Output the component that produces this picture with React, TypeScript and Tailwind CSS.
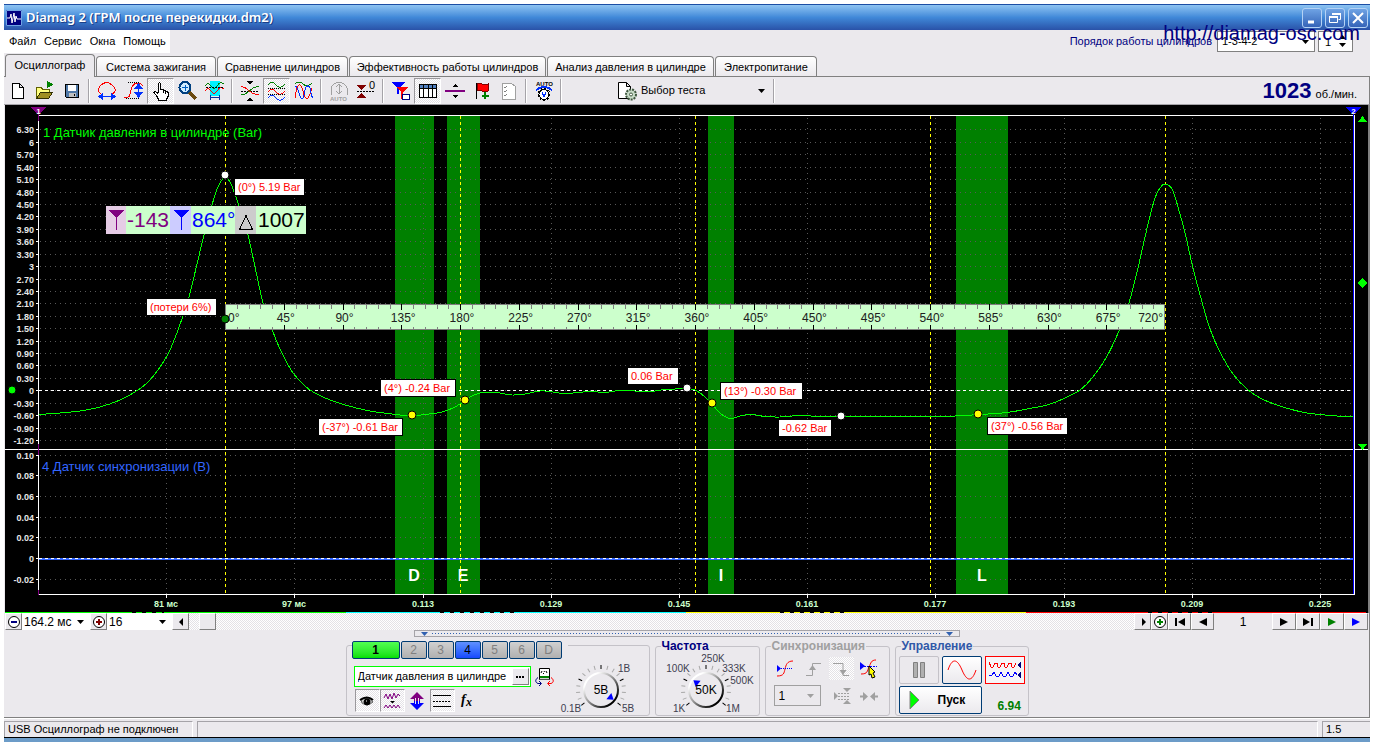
import type { ReactNode } from "react";

const tabs = [
    { title: "Осциллограф", width: "w-[90px]" },
    { title: "Система зажигания", width: "w-[120px]" },
    { title: "Сравнение цилиндров", width: "w-[131px]" },
    { title: "Эффективность работы цилиндров", width: "w-[197px]" },
    { title: "Анализ давления в цилиндре", width: "w-[167px]" },
    { title: "Электропитание", width: "w-[102px]" },
];

const hatch =
    "bg-[repeating-conic-gradient(#ffffff_0_25%,#e4e2e6_0_50%)] bg-[length:2px_2px]";

const raised =
    "border border-t-white border-l-white border-r-[#808080] border-b-[#808080] bg-[#ebe9ed]";

/* ---------- title bar, menu, tabs ---------- */

function TitleButton({ label, children }: { label: string; children: ReactNode }) {
    return (
        <button
            aria-label={label}
            className="w-[20px] h-[20px] flex items-center justify-center rounded-[3px] border border-[#b4d2f5] bg-linear-to-b from-[#6fa3e4] to-[#3564b8]"
        >
            <svg width="14" height="14" viewBox="0 0 14 14" fill="none" stroke="#fff" strokeWidth="2">
                {children}
            </svg>
        </button>
    );
}

function TitleBar() {
    return (
        <header className="h-[26px] flex items-center px-[2px] border-t border-[#1c4ea4] bg-linear-to-b from-[#8ec4f2] via-[#4088d8] to-[#2a52a8]">
            <svg width="16" height="16" viewBox="0 0 16 16" className="mr-[4px]">
                <rect width="16" height="16" fill="#000080" />
                <path d="M.5.500h15v15H.5z" fill="none" stroke="#6fa3e4" />
                <path d="M1 8h3l1-4 1 9 2-10 1 9 1-6 1 3h4" fill="none" stroke="#fff" />
            </svg>
            <h1 className="font-['Noto_Sans'] font-semibold text-[13px] text-white [text-shadow:1px_1px_#1c3f88]">
                Diamag 2 (ГРМ после перекидки.dm2)
            </h1>
            <div className="ml-auto flex gap-[3px]">
                <TitleButton label="Свернуть">
                    <path d="M3 11h6" strokeWidth="3" />
                </TitleButton>
                <TitleButton label="Развернуть">
                    <path d="M4.500 4V2.500h8v6h-2" strokeWidth="1" />
                    <path d="M1.500 5.500h8v6h-8z" strokeWidth="1" />
                    <path d="M1 6h9M4 3h9" />
                </TitleButton>
                <TitleButton label="Закрыть">
                    <path d="M2 2l10 10M12 2L2 12" />
                </TitleButton>
            </div>
        </header>
    );
}

function MenuBar() {
    return (
        <div className="h-[24px] flex justify-between">
            <nav className="w-[166px] h-[23px] flex items-center gap-[8px] pl-[5px] bg-white text-[11px] whitespace-nowrap">
                <a href="#file">Файл</a>
                <a href="#service">Сервис</a>
                <a href="#windows">Окна</a>
                <a href="#help">Помощь</a>
            </nav>
            <div className="relative h-[23px] flex items-center pr-[17px]">
                <label htmlFor="order" className="text-[11px] text-[#000080] mr-[5px]">
                    Порядок работы цилиндров
                </label>
                <span className="relative flex">
                    <select
                        id="order"
                        className="appearance-none w-[98px] h-[21px] pl-[4px] border border-[#808080] bg-white text-[11px]"
                    >
                        <option>1-3-4-2</option>
                    </select>
                    <Arrow className="absolute right-[6px] top-[9px]" />
                </span>
                <span className="relative flex ml-[3px]">
                    <input
                        aria-label="Цилиндр"
                        defaultValue="1"
                        className="w-[35px] h-[21px] pl-[6px] border border-[#808080] bg-white text-[11px]"
                    />
                    <svg width="7" height="12" viewBox="0 0 7 12" className="absolute right-[7px] top-[4px]">
                        <path d="M0 4L3.500 0 7 4zM0 8h7l-3.500 4z" />
                    </svg>
                </span>
                <a
                    href="#site"
                    className="absolute right-[10px] top-[-9px] text-[20px] leading-[24px] text-[#000080]"
                >
                    http://diamag-osc.com
                </a>
            </div>
        </div>
    );
}

function Arrow({ className, fill = "#000" }: { className?: string; fill?: string }) {
    return (
        <svg width="7" height="4" viewBox="0 0 7 4" className={`pointer-events-none ${className ?? ""}`}>
            <path d="M0 0h7L3.500 4z" fill={fill} />
        </svg>
    );
}

function Tabs() {
    return (
        <div role="tablist" className="h-[23px] flex items-end gap-px pl-px border-b border-[#808080]">
            {tabs.map((tab, index) => (
                <button
                    key={tab.title}
                    role="tab"
                    aria-selected={index === 0}
                    className={`${tab.width} border border-b-0 border-[#808080] rounded-t-[4px] text-[11px] leading-[18px] whitespace-nowrap ${
                        index === 0
                            ? "h-[23px] -mb-px bg-[#ebe9ed] pb-[2px]"
                            : "h-[20px] bg-linear-to-b from-white to-[#ebe9ed]"
                    }`}
                >
                    {tab.title}
                </button>
            ))}
        </div>
    );
}

/* ---------- toolbar ---------- */

function Tool({ label, on, children }: { label: string; on?: boolean; children: ReactNode }) {
    return (
        <button
            aria-label={label}
            aria-pressed={on}
            className={`w-[27px] h-[26px] shrink-0 flex items-center justify-center ${
                on ? `border border-t-[#9a989c] border-l-[#9a989c] border-white ${hatch}` : ""
            }`}
        >
            <svg width="22" height="22" viewBox="0 0 22 22" fill="none" stroke="#000" shapeRendering="crispEdges">
                {children}
            </svg>
        </button>
    );
}

function Separator() {
    return (
        <span className="w-[8px] h-[24px] shrink-0 flex justify-center">
            <span className="w-[2px] bg-[#a5a3a8] border-r border-white" />
        </span>
    );
}

function Toolbar() {
    return (
        <div className="h-[28px] flex items-center border-b border-[#a5a3a8] border-r border-r-[#808080]">
            <Tool label="Новый">
                <path d="M5.500 3.500h7l4 4v11h-11zM12.500 3.500v4h4" fill="#fff" />
            </Tool>
            <Tool label="Открыть">
                <path d="M2.500 18.500v-11h5l1 2h7v3" fill="#ffff80" stroke="#606000" />
                <path d="M2.500 18.500l4-6h12l-4 6z" fill="#a09020" stroke="#303000" />
                <path d="M13.500 7.500V1.500l5 3z" fill="#008000" stroke="#008000" />
            </Tool>
            <Tool label="Сохранить">
                <path d="M4.500 4.500h13v13h-12l-1-1z" fill="#5078a8" />
                <path d="M7 5h8v6H7z" fill="#fff" stroke="none" />
                <path d="M8 13h7v4H8z" fill="#c0c0c0" stroke="none" />
                <path d="M13 14v2" />
            </Tool>
            <Separator />
            <Tool label="Период">
                <path d="M5 14C1 11 2 8 5 5q6-5 11 0c4 3 5 6 0 9" stroke="#f00" />
                <path d="M3 16.500h16M7 13l-4 3.500L7 20M15 13l4 3.500-4 3.500" stroke="#0030ff" />
                <path d="M3 16.500l4-3v6zM19 16.500l-4-3v6z" fill="#0030ff" stroke="none" />
            </Tool>
            <Tool label="Амплитуда">
                <path d="M5 2.500h12M3 18.500h14" strokeDasharray="1 1" />
                <path d="M1 18c6 0 6-3 7-8s3-7 7-7q3 0 5 3" stroke="#f00" />
                <path d="M15.500 4v13" stroke="#0030ff" />
                <path d="M11 9l4.500-6L20 9zM11 12l4.500 6 4.500-6z" fill="#0030ff" stroke="none" />
            </Tool>
            <Tool label="Рука" on>
                <path
                    d="M8.500 12.500v-9q1-2 2 0v6q1-1 2.500 0v1q1-1 2.500 0v1q2-1 2.500 1v4l-2 4h-7l-2-4-3-4q1-2 4 1"
                    fill="#fff"
                />
                <path d="M13 10v3M15.500 11v3" />
            </Tool>
            <Tool label="Масштаб">
                <path d="M12 12l7 7" stroke="#6b4a10" strokeWidth="3" />
                <circle cx="8" cy="7.500" r="5.500" fill="#d0ecff" stroke="#004080" strokeWidth="2" />
                <path d="M5 7.500h6M8 4.500v6" stroke="#0060c0" />
            </Tool>
            <Tool label="Фрагмент">
                <path d="M6 1h10v15H6z" fill="#00f0ff" stroke="none" />
                <path d="M1 6q3-5 6 0t6 0 7-2" stroke="#008000" />
                <path d="M1 11q3-5 6 0t6 0 7-2" stroke="#f00" />
                <path d="M2 7.500h18" strokeDasharray="2 1" />
                <path d="M6.500 15v5M15.500 15v5M7 17.500h8" stroke="#0030a0" />
            </Tool>
            <Separator />
            <Tool label="Совместить">
                <path d="M2 11h18" strokeDasharray="2 1" />
                <path d="M2 7c6-2 8 8 18 8" stroke="#f00" />
                <path d="M2 15c8 0 10-10 18-8" stroke="#008000" />
                <path d="M8 1h6l-3 4zM8 21h6l-3-4z" fill="#000" stroke="none" />
            </Tool>
            <Tool label="Разделить" on>
                <path d="M2 5q4-5 8 0t9-1" stroke="#008000" />
                <path d="M2 12q4-5 8 0t9-1" stroke="#f00" />
                <path d="M2 18q4-5 8 0t9-1" stroke="#0030ff" />
                <path d="M2 8.500h18M2 14.500h18" strokeDasharray="1 1" />
            </Tool>
            <Tool label="Наложить">
                <path d="M2 4q4-4 8 0t9-1" stroke="#008000" />
                <path d="M2 18C4 2 8 2 10 11s5 12 9-3" stroke="#f00" />
                <path d="M2 6c4 0 4 13 7 13s2-14 6-13 2 10 5 12" stroke="#0030ff" />
            </Tool>
            <Separator />
            <Tool label="Авто амплитуда">
                <path d="M3 15V8q2-5 8-6 6 1 8 6v7M11 4v10M8 7l3-3 3 3M8 11l3 3 3-3" stroke="#a0a0a0" />
                <text x="2" y="21" fontSize="6" fontWeight="700" fill="#a0a0a0" stroke="none">AUTO</text>
            </Tool>
            <Tool label="Сброс нуля">
                <path d="M2 11.500h18" strokeDasharray="2 1" />
                <path d="M2 5.500h9" stroke="#800000" />
                <path d="M3 6h7l-3.500 4z" fill="#800000" stroke="none" />
                <path d="M2 17.500h9" stroke="#800000" />
                <path d="M3 17h7l-3.500-4z" fill="#800000" stroke="none" />
                <text x="14" y="9" fontSize="11" fill="#000" stroke="none">0</text>
            </Tool>
            <Separator />
            <Tool label="Курсоры">
                <path d="M1 2h14L9 8v6H7V8z" fill="#00f" stroke="none" />
                <path d="M7 7h11l-5 5v7h-2v-7z" fill="#f00" stroke="none" />
                <path d="M12.500 14.500h7v5h-7z" fill="#fff" stroke="#000080" />
            </Tool>
            <Tool label="Таблица" on>
                <path d="M2.500 4.500h17v13h-17z" fill="#fff" />
                <path d="M3 6h16" stroke="#5080c0" strokeWidth="3" />
                <path d="M2 8.500h18M6.500 5v13M11.500 5v13M15.500 5v13" />
            </Tool>
            <Tool label="Линейка">
                <path d="M1 11h20" stroke="#800080" strokeWidth="2" />
                <path d="M8 7h6l-3-3zM8 15h6l-3 3z" fill="#000" stroke="none" />
            </Tool>
            <Tool label="Маркер">
                <path d="M5.500 3v16" />
                <path d="M6 4q3-2 5 0t6 0v7q-3 2-6 0t-5 0z" fill="#f00" stroke="#800000" />
                <path d="M14 12v7M10.500 15.500h7" stroke="#008000" strokeWidth="2" />
            </Tool>
            <Tool label="Отчёт">
                <path d="M4.500 3.500h9l4 3v13h-13z" fill="#fff" stroke="#a0a0a0" />
                <path d="M6 7l1 1 2-2M6 11l1 1 2-2M6 15l1 1 2-2" stroke="#808080" />
            </Tool>
            <Separator />
            <Tool label="Авто">
                <text x="3" y="6" fontSize="6" fontWeight="700" fill="#000" stroke="none">AUTO</text>
                <path d="M3 10q8-6 16 0" stroke="#0030ff" strokeWidth="2" />
                <circle cx="11" cy="14.500" r="5" fill="#fff" />
                <circle cx="11" cy="14.500" r="6" strokeDasharray="2 2" />
                <path d="M9 12l2 5 2-5" stroke="#0030ff" />
            </Tool>
            <Separator />
            <button className="w-[205px] flex items-center pl-[51px] pr-[5px] text-[11px]">
                <svg width="22" height="22" viewBox="0 0 22 22" fill="none" stroke="#000" className="mr-[3px]">
                    <path d="M2.500 2.500h8l4 4v12h-12zM10.500 2.500v4h4" fill="#fff" />
                    <circle cx="15" cy="14.500" r="5" fill="#c8dcc8" stroke="#405840" strokeWidth="2" strokeDasharray="2 1" />
                    <circle cx="15" cy="14.500" r="1.500" fill="#fff" stroke="#405840" />
                </svg>
                Выбор теста
                <Arrow className="ml-auto" />
            </button>
            <Separator />
            <p className="ml-auto pr-[12px] text-[11px]">
                <b className="mr-px text-[22px] leading-[24px] text-[#000080]">1023</b> об./мин.
            </p>
        </div>
    );
}

/* ---------- oscillogram ---------- */

const timeGrid = [
    { x: 166, label: "81 мс" },
    { x: 294, label: "97 мс" },
    { x: 423, label: "0.113" },
    { x: 551, label: "0.129" },
    { x: 679, label: "0.145" },
    { x: 807, label: "0.161" },
    { x: 935, label: "0.177" },
    { x: 1064, label: "0.193" },
    { x: 1192, label: "0.209" },
    { x: 1320, label: "0.225" },
];

const pressureTicks = Array.from({ length: 26 }, (_, i) => (63 - i * 3) / 10);
const syncTicks = [0.1, 0.08, 0.06, 0.04, 0.02, 0, -0.02];
const pressureY = (v: number) => Math.round(390.3 - v * 41.4) + 0.5;
const syncY = (v: number) => Math.round(558 - v * 1033) + 0.5;
const tickLabel = (v: number) => (Number.isInteger(v) ? String(v) : v.toFixed(2));

const valves = [
    { name: "D", x: 395, width: 39, label: 414 },
    { name: "E", x: 447, width: 33, label: 463 },
    { name: "I", x: 708, width: 26, label: 721 },
    { name: "L", x: 956, width: 52, label: 982 },
];

const strokes = [225, 460, 695, 930, 1165];

const notes = [
    { x: 235, y: 179, width: 69, text: "(0°) 5.19 Bar" },
    { x: 147, y: 299, width: 69, text: "(потери 6%)" },
    { x: 381, y: 380, width: 74, text: "(4°) -0.24 Bar" },
    { x: 319, y: 419, width: 83, text: "(-37°) -0.61 Bar" },
    { x: 628, y: 368, width: 50, text: "0.06 Bar" },
    { x: 721, y: 383, width: 81, text: "(13°) -0.30 Bar" },
    { x: 779, y: 420, width: 52, text: "-0.62 Bar" },
    { x: 988, y: 418, width: 79, text: "(37°) -0.56 Bar" },
];

const points = [
    { x: 225, y: 175, fill: "#fff" },
    { x: 687, y: 388, fill: "#fff" },
    { x: 841, y: 416, fill: "#fff" },
    { x: 412, y: 415, fill: "#ff0" },
    { x: 465, y: 400, fill: "#ff0" },
    { x: 712, y: 403, fill: "#ff0" },
    { x: 978, y: 414, fill: "#ff0" },
    { x: 225, y: 319, fill: "#008000" },
    { x: 12, y: 390, fill: "#0f0" },
];

const pressure = [
    [38, 414.5], [60, 413], [80, 411], [100, 407], [120, 400], [138, 390], [148, 382], [158, 370],
    [170, 350], [183, 316], [190, 293], [204, 235], [212, 205], [218, 187], [225, 177], [231, 184],
    [238, 203], [248, 235], [263, 303], [273, 332], [280, 349], [291, 370], [300, 381], [310, 390],
    [325, 398], [345, 405], [370, 411], [400, 415], [412, 416], [425, 414.5], [440, 412.5],
    [453, 408], [463, 402], [472, 396], [480, 393], [490, 392], [500, 393], [512, 395], [525, 394],
    [540, 391], [550, 391.5], [565, 393.5], [590, 391.5], [605, 392.5], [620, 390.5], [650, 391.5],
    [665, 389.5], [690, 389], [697, 391], [705, 397], [712, 404], [720, 413], [730, 418.5],
    [742, 415.5], [752, 414.5], [765, 416.5], [780, 417], [800, 415.5], [820, 416.5], [840, 416.5],
    [930, 416.5], [955, 416], [980, 414.5], [1007, 412.5], [1027, 409], [1047, 405], [1063, 399],
    [1080, 390], [1093, 377], [1106, 358], [1119, 331], [1129, 303], [1138, 268], [1145, 237],
    [1150, 216], [1155, 198], [1160, 188], [1165, 184], [1172, 189], [1178, 207], [1186, 237],
    [1192, 264], [1202, 302], [1210, 329], [1220, 352], [1233, 374], [1248, 390], [1262, 399],
    [1283, 407], [1307, 413], [1337, 416], [1353, 416.5],
];

// Catmull-Rom spline through the samples
function smooth(p: number[][]) {
    let d = `M${p[0][0]} ${p[0][1]}`;
    for (let i = 0; i < p.length - 1; i++) {
        const a = p[i - 1] ?? p[i];
        const b = p[i];
        const c = p[i + 1];
        const e = p[i + 2] ?? c;
        d += `C${b[0] + (c[0] - a[0]) / 6} ${b[1] + (c[1] - a[1]) / 6} ${c[0] - (e[0] - b[0]) / 6} ${
            c[1] - (e[1] - b[1]) / 6
        } ${c[0]} ${c[1]}`;
    }
    return d;
}

function Ruler() {
    return (
        <g>
            <rect x="225.5" y="304.500" width="939" height="25" fill="#ccffcc" stroke="#808080" />
            {Array.from({ length: 79 }, (_, i) => i + 1).map((i) => {
                const x = Math.round(225 + i * 11.75) + 0.5;
                const major = i % 5 === 0;
                return (
                    <path
                        key={i}
                        d={major ? `M${x} 304v6M${x} 325v5` : `M${x} 305v4M${x} 327v3`}
                        stroke={major ? "#000" : "#808080"}
                    />
                );
            })}
            {Array.from({ length: 17 }, (_, i) => i).map((i) => (
                <text
                    key={i}
                    x={i === 0 ? 228 : i === 16 ? 1163 : 227 + i * 58.75}
                    y="322"
                    fontSize="12"
                    fill="#202020"
                    textAnchor={i === 0 ? "start" : i === 16 ? "end" : "middle"}
                >
                    {i * 45}°
                </text>
            ))}
        </g>
    );
}

function Readout() {
    return (
        <g fontSize="21">
            <rect x="106" y="206" width="200" height="28" fill="#ccffcc" />
            <rect x="106" y="206" width="20" height="28" fill="#e6cce6" />
            <rect x="170" y="206" width="21" height="28" fill="#ccccff" />
            <rect x="235" y="206" width="21" height="28" fill="#cccccc" />
            <path d="M108 210h16l-7 8v12h-1v-12z" fill="#800080" />
            <path d="M173 210h16l-7 8v12h-1v-12z" fill="#0000ff" />
            <path d="M239.500 229.500h13l-6.500-14z" fill="none" stroke="#000" />
            <text x="127" y="227" fill="#800080">-143</text>
            <text x="192" y="227" fill="#0000ff">864°</text>
            <text x="258" y="227" fill="#000">1007</text>
        </g>
    );
}

function Axis({ values, y }: { values: number[]; y: (v: number) => number }) {
    return (
        <>
            {values.map((v) => (
                <g key={v}>
                    <path d={`M40 ${y(v)}H1353`} stroke="#585858" strokeDasharray="1 4" />
                    <path d={`M36 ${y(v)}h3`} stroke="#fff" />
                    <text x="34" y={y(v) + 3} fontSize="9" fontWeight="700" fill="#e8e8e8" textAnchor="end">
                        {tickLabel(v)}
                    </text>
                </g>
            ))}
        </>
    );
}

function Oscillogram() {
    return (
        <svg
            viewBox="5 105 1365 508"
            className="block w-full bg-black font-['Liberation_Sans',sans-serif]"
            shapeRendering="crispEdges"
        >
            {valves.map((v) => (
                <rect key={v.name} x={v.x} y="116" width={v.width} height="478" fill="#008000" />
            ))}

            <Axis values={pressureTicks} y={pressureY} />
            <Axis values={syncTicks} y={syncY} />
            {timeGrid.map((t) => (
                <g key={t.x}>
                    <path d={`M${t.x + 0.5} 118V594`} stroke="#585858" strokeDasharray="1 4" />
                    <path d={`M${t.x + 0.5} 594v4`} stroke="#fff" />
                    <text x={t.x} y="607" fontSize="9" fontWeight="700" fill="#ccffcc" textAnchor="middle">
                        {t.label}
                    </text>
                </g>
            ))}

            <text x="43" y="137" fontSize="13" fill="#00ff00">1 Датчик давления в цилиндре (Bar)</text>
            <text x="42" y="471" fontSize="13" fill="#3366ff">4 Датчик синхронизации (В)</text>
            {valves.map((v) => (
                <text key={v.name} x={v.label} y="581" fontSize="16" fontWeight="700" fill="#fff" textAnchor="middle">
                    {v.name}
                </text>
            ))}

            <path d="M39 559H1353" stroke="#3366ff" strokeWidth="2" />
            <path d="M39 390.500H1353M39 558.500H1353" stroke="#fff" strokeDasharray="3 3" />
            {strokes.map((x) => (
                <path key={x} d={`M${x + 0.5} 116V594`} stroke="#ffff00" strokeDasharray="3 3" />
            ))}
            <path d={smooth(pressure)} fill="none" stroke="#00ff00" />

            <path d="M38.500 594V115.500H1354.500V594.500H38M5 449.500H1368" fill="none" stroke="#fff" />
            <path d="M1353.500 111V594" stroke="#0000ff" />
            <path d="M38.500 112v9M38.500 444v11M38.500 590v5" stroke="#800080" />

            <path d="M31 107h15l-7 8h-1z" fill="#800080" />
            <text x="38.500" y="114" fontSize="8" fontWeight="700" fill="#fff" textAnchor="middle">1</text>
            <path d="M1346 107h15l-7 8h-1z" fill="#0000ff" />
            <text x="1353.500" y="114" fontSize="8" fontWeight="700" fill="#fff" textAnchor="middle">2</text>
            <path d="M1358 122h9l-4.500-6zM1358 444h9l-4.500 6zM1362.500 278l5 5-5 5-5-5z" fill="#00ff00" />

            <Ruler />
            <Readout />
            {notes.map((n) => (
                <g key={n.text}>
                    <rect x={n.x - 1} y={n.y - 1} width={n.width + 2} height="18" fill="#000" />
                    <rect x={n.x} y={n.y} width={n.width} height="16" fill="#fff" />
                    <text x={n.x + 3} y={n.y + 12} fontSize="11" fill="#ff0000">
                        {n.text}
                    </text>
                </g>
            ))}
            {points.map((p) => (
                <circle
                    key={`${p.x}-${p.y}`}
                    cx={p.x}
                    cy={p.y}
                    r="4"
                    fill={p.fill}
                    stroke="#000"
                    shapeRendering="geometricPrecision"
                />
            ))}

            {/* recorded pages */}
            <path d="M5 612.500H346" stroke="#00ff00" />
            <path d="M346 612.500H686" stroke="#00ffff" />
            <path d="M686 612.500H1026" stroke="#ffff00" />
            <path d="M1026 612.500H1366" stroke="#ff0000" />
            <path d="M132 612.500h32M440 612.500h80M780 612.500h70M1148 612.500h70" stroke="#000" strokeDasharray="4 6" />
            <path d="M1369 105V613" stroke="#808080" strokeWidth="2" />
        </svg>
    );
}

/* ---------- scroll row ---------- */

function Step({ label, width = "w-[23px]", children }: { label: string; width?: string; children: ReactNode }) {
    return (
        <button aria-label={label} className={`${width} h-[17px] shrink-0 flex items-center justify-center ${raised}`}>
            <svg width="14" height="14" viewBox="0 0 14 14" fill="none">
                {children}
            </svg>
        </button>
    );
}

function Combo({ label, value, width }: { label: string; value: string; width: string }) {
    return (
        <span className="relative flex">
            <select aria-label={label} className={`appearance-none ${width} h-[17px] pl-[2px] bg-white text-[12px]`}>
                <option>{value}</option>
            </select>
            <Arrow className="absolute right-[6px] top-[7px]" />
        </span>
    );
}

function ScrollRow() {
    return (
        <div className="h-[17px] flex items-center pl-px pr-px border-r border-[#808080]">
            <Step label="Сжать" width="w-[17px]">
                <circle cx="7" cy="7" r="5.500" fill="#fff" stroke="#000" />
                <path d="M4 7h6" stroke="#000080" strokeWidth="2" />
            </Step>
            <Combo label="Развёртка" value="164.2 мс" width="w-[68px]" />
            <Step label="Растянуть" width="w-[17px]">
                <circle cx="7" cy="7" r="5.500" fill="#fff" stroke="#000" />
                <path d="M4 7h6M7 4v6" stroke="#800000" strokeWidth="2" />
            </Step>
            <Combo label="Масштаб" value="16" width="w-[65px]" />
            <Step label="Влево" width="w-[17px]">
                <path d="M9 3v8L5 7z" fill="#000" />
            </Step>
            <div className={`flex-1 h-[17px] pl-[10px] ${hatch}`}>
                <div className={`w-[17px] h-[17px] ${raised}`} />
            </div>
            <Step label="Вправо" width="w-[17px]">
                <path d="M6 3v8l4-4z" fill="#000" />
            </Step>
            <Step label="Добавить" width="w-[17px]">
                <circle cx="7" cy="7" r="5.500" fill="#fff" stroke="#000" />
                <path d="M4 7h6M7 4v6" stroke="#008000" strokeWidth="2" />
            </Step>
            <Step label="Первая">
                <path d="M2 3h2v8H2zM12 3v8L5 7z" fill="#000" />
            </Step>
            <Step label="Предыдущая">
                <path d="M11 3v8L3 7z" fill="#000" />
            </Step>
            <span className="w-[58px] text-center text-[12px]">1</span>
            <Step label="Следующая" width="w-[24px]">
                <path d="M3 3v8l8-4z" fill="#000" />
            </Step>
            <Step label="Последняя" width="w-[24px]">
                <path d="M10 3h2v8h-2zM2 3v8l7-4z" fill="#000" />
            </Step>
            <Step label="Проиграть" width="w-[24px]">
                <path d="M3 3v8l8-4z" fill="#008000" />
            </Step>
            <Step label="Проиграть всё" width="w-[24px]">
                <path d="M3 3v8l8-4z" fill="#00f" />
            </Step>
        </div>
    );
}

/* ---------- control panel ---------- */

type KnobLabel = { x: number; y: number; text: string };

function Knob({ id, value, labels, pointer }: { id: string; value: string; labels: KnobLabel[]; pointer: number }) {
    return (
        <svg width="100" height="64" viewBox="0 0 100 64" fontSize="10" fill="#404050">
            <defs>
                <linearGradient id={id} x1="0" y1="0" x2="1" y2="1">
                    <stop offset="0.2" stopColor="#ffffff" />
                    <stop offset="0.5" stopColor="#909090" />
                    <stop offset="0.85" stopColor="#000000" />
                </linearGradient>
            </defs>
            {Array.from({ length: 17 }, (_, i) => (
                <path
                    key={i}
                    d="M50 17v-4"
                    stroke={i % 4 === 0 ? "#000" : "#a8a8a8"}
                    transform={`rotate(${-128 + i * 16} 50 38)`}
                />
            ))}
            <circle cx="50" cy="38" r="17" fill="#ebe9ed" stroke={`url(#${id})`} strokeWidth="2" />
            <path d="M50 22l-4 6h8z" fill="#0000ff" transform={`rotate(${pointer} 50 38)`} />
            <text x="50" y="42" fontSize="12" fill="#000" textAnchor="middle">
                {value}
            </text>
            {labels.map((l) => (
                <text key={l.text} x={l.x} y={l.y} textAnchor="middle">
                    {l.text}
                </text>
            ))}
        </svg>
    );
}

function Small({ label, on, children }: { label: string; on?: boolean; children: ReactNode }) {
    return (
        <button
            aria-label={label}
            className={`w-[25px] h-[23px] flex items-center justify-center ${
                on ? `border border-t-[#9a989c] border-l-[#9a989c] border-white ${hatch}` : ""
            }`}
        >
            <svg width="20" height="20" viewBox="0 0 20 20" fill="none" stroke="#000">
                {children}
            </svg>
        </button>
    );
}

function ChannelGroup() {
    return (
        <div className="mt-[5px] w-[304px] h-[71px] flex border border-[#c4c2c8] rounded-[3px]">
            <div className="-mt-[5px] flex flex-col pl-[5px]">
                <div className="flex gap-px pr-[6px] bg-[#ebe9ed]">
                    <button className="w-[48px] h-[18px] border border-[#003c74] rounded-[2px] bg-linear-to-b from-[#50ff50] to-[#00e000] text-[12px] leading-[14px] font-bold">
                        1
                    </button>
                    {["2", "3", "4", "5", "6", "D"].map((name) => (
                        <button
                            key={name}
                            className={`w-[26px] h-[18px] border border-[#003c74] rounded-[2px] text-[12px] leading-[14px] ${
                                name === "4"
                                    ? "bg-linear-to-b from-[#6090ff] to-[#1848ff] text-black"
                                    : "bg-linear-to-b from-[#d0d0d0] to-[#b0b0b0] text-[#808080]"
                            }`}
                        >
                            {name}
                        </button>
                    ))}
                </div>
                <div className="flex items-center gap-[4px] mt-[7px] pl-[2px]">
                    <div className="flex w-[177px] h-[21px] border border-[#00ff00] bg-white">
                        <input
                            aria-label="Датчик"
                            defaultValue="Датчик давления в цилиндре"
                            className="w-[157px] pl-[3px] text-[11px]"
                        />
                        <button aria-label="Выбрать датчик" className={`w-[17px] h-[17px] mt-px flex items-center justify-center ${raised}`}>
                            <svg width="8" height="2" viewBox="0 0 8 2">
                                <path d="M0 0h2v2H0zM3 0h2v2H3zM6 0h2v2H6z" />
                            </svg>
                        </button>
                    </div>
                    <svg width="19" height="20" viewBox="0 0 19 20" fill="none" stroke="#000">
                        <path d="M4.500 1.500h10v11h-10z" fill="#fff" />
                        <path d="M5 10h9" stroke="#008000" strokeWidth="2" />
                        <path d="M5 12h9" stroke="#a0a0a0" />
                        <path d="M6 6l1-2M9 5l.500-1M12 6l-1-2M8 7l1-1" />
                        <path d="M3 10.500c-3 2-3 5 0 6h3M4 14l2.500 2.500L4 19" stroke="#000080" />
                        <path d="M16 10.500c3 2 3 5 0 6h-3M15 14l-2.500 2.500L15 19" stroke="#f00" />
                    </svg>
                </div>
                <div className="flex mt-[2px] pl-[3px]">
                    <Small label="Показать" on>
                        <path d="M4 9q6-4 12 2-6 5-11 1z" fill="#c8c8c8" stroke="#606060" />
                        <circle cx="10" cy="11" r="3" fill="#000" />
                        <path d="M3 9q7-5 13 0" strokeWidth="2" />
                        <path d="M9 10h1" stroke="#fff" />
                    </Small>
                    <Small label="Фильтр" on>
                        <path d="M2 7l2-4 2 5 2-5 2 5 2-6 2 5 2-4 2 2M2 17l2-3 2 3 2-3 2 3 2-3 2 3 2-3 2 3" stroke="#800080" />
                        <path d="M8 10h5l-2.500 2.500z" fill="#000" stroke="none" />
                    </Small>
                    <Small label="Инверсия">
                        <path d="M10 1l7 7h-4v3H7V8H3z" fill="#800080" stroke="none" />
                        <path d="M10 19l7-7h-4v-2H7v2H3z" fill="#0000ff" stroke="none" />
                        <path d="M8.500 7v6M11.500 7v6" stroke="#ebe9ed" />
                    </Small>
                    <Small label="Уровни" on>
                        <path d="M1 4.500h18M1 15.500h18" />
                        <path d="M1 10.500h18" strokeDasharray="2 1" />
                    </Small>
                    <Small label="Функция">
                        <text x="4" y="13" fontSize="14" fontStyle="italic" fontWeight="700" fill="#000" stroke="none" fontFamily="Liberation Serif">
                            f
                        </text>
                        <text x="9" y="15" fontSize="12" fontStyle="italic" fontWeight="700" fill="#000" stroke="none" fontFamily="Liberation Serif">
                            x
                        </text>
                    </Small>
                </div>
            </div>
            <div className="-ml-[17px] mt-[6px]">
                <Knob
                    id="range"
                    value="5В"
                    pointer={128}
                    labels={[
                        { x: 73, y: 20, text: "1В" },
                        { x: 77, y: 60, text: "5В" },
                        { x: 20, y: 60, text: "0.1В" },
                    ]}
                />
            </div>
        </div>
    );
}

function Group({ title, width, color, children }: { title: string; width: string; color: string; children: ReactNode }) {
    return (
        <fieldset className={`${width} h-[76px] border border-[#c4c2c8] rounded-[3px]`}>
            <legend className={`ml-[5px] px-px text-[12px] leading-[12px] font-bold ${color}`}>{title}</legend>
            {children}
        </fieldset>
    );
}

function Panel() {
    return (
        <div className="border-r border-b border-[#808080] pb-px">
            <div className="mx-auto w-[546px] h-[7px] flex items-center gap-[4px] px-[6px] border border-[#a5a3a8]">
                <Arrow fill="#3060b0" />
                <span className="flex-1 h-px bg-[repeating-linear-gradient(90deg,#3060b0_0_1px,transparent_1px_3px)]" />
                <Arrow fill="#3060b0" />
            </div>
            <div className="flex justify-center gap-[5px] pl-px mt-[3px]">
                <ChannelGroup />
                <Group title="Частота" width="w-[105px]" color="text-[#000080]">
                    <Knob
                        id="rate"
                        value="50K"
                        pointer={-52}
                        labels={[
                            { x: 57, y: 10, text: "250K" },
                            { x: 22, y: 20, text: "100K" },
                            { x: 78, y: 20, text: "333K" },
                            { x: 86, y: 32, text: "500K" },
                            { x: 23, y: 60, text: "1K" },
                            { x: 77, y: 60, text: "1M" },
                        ]}
                    />
                </Group>
                <Group title="Синхронизация" width="w-[125px]" color="text-[#a0a0a0]">
                    <div className="flex justify-between px-[7px] pt-[5px]">
                        <Small label="По уровню">
                            <path d="M2 17c7 0 7-3 8-7s2-8 8-8" stroke="#f00" />
                            <path d="M2 9.500h16" stroke="#00f" strokeDasharray="1 1" />
                            <path d="M2 6v7l4-3.500z" fill="#00f" stroke="none" />
                        </Small>
                        <Small label="По фронту">
                            <path d="M3 16.500h6.500V4.500H18" stroke="#a0a0a0" />
                            <path d="M6 11l3.500-5 3.500 5z" fill="#a0a0a0" stroke="none" />
                        </Small>
                        <span className={`flex ${hatch}`}>
                            <Small label="По спаду">
                                <path d="M2 4.500h10V16.500h6" stroke="#a0a0a0" />
                                <path d="M8.500 11l3.500 5 3.500-5z" fill="#a0a0a0" stroke="none" />
                            </Small>
                        </span>
                        <Small label="Курсором">
                            <path d="M2 15c7 0 6-3 8-7s2-7 7-7" stroke="#f00" />
                            <path d="M2 7.500h16" stroke="#00f" strokeDasharray="2 1" />
                            <path d="M1 3v8l5-4z" fill="#00f" stroke="none" />
                            <path d="M10 7l6 6-2 1 2 4-3 1-1-4-2 1z" fill="#ff0" />
                        </Small>
                    </div>
                    <div className="flex items-center justify-between pl-[8px] pr-[7px] mt-[4px]">
                        <span className="relative flex">
                            <select
                                aria-label="Канал синхронизации"
                                className="appearance-none w-[47px] h-[21px] pl-[4px] border border-[#a0a0a0] text-[12px]"
                            >
                                <option>1</option>
                            </select>
                            <Arrow className="absolute right-[7px] top-[9px]" fill="#a0a0a0" />
                        </span>
                        <div className="flex gap-[2px]">
                            <Small label="Зона">
                                <path d="M2 6v8l4-4zM11 2h8l-4 4zM11 18h8l-4-4z" fill="#a0a0a0" stroke="none" />
                                <path d="M6 7.500h12M6 10.500h12M6 13.500h12" stroke="#a0a0a0" strokeDasharray="2 1" />
                            </Small>
                            <Small label="К центру">
                                <path d="M1 10.500h4M15 10.500h4" stroke="#a0a0a0" strokeWidth="2" />
                                <path d="M4 6v9l5-4.500zM16 6v9l-5-4.500z" fill="#a0a0a0" stroke="none" />
                            </Small>
                        </div>
                    </div>
                </Group>
                <Group title="Управление" width="w-[134px]" color="text-[#3058a8]">
                    <div className="flex gap-[3px] pl-[3px] pt-[4px]">
                        <button aria-label="Пауза" className="w-[40px] h-[28px] flex items-center justify-center border border-[#c4c2c8] rounded-[2px]">
                            <svg width="12" height="16" viewBox="0 0 12 16" fill="#b0b0b0" stroke="#808080">
                                <path d="M.5.500h4v15h-4zM7.500.500h4v15h-4z" />
                            </svg>
                        </button>
                        <button aria-label="Однократно" className="w-[40px] h-[28px] flex items-center justify-center border border-[#003c74] rounded-[2px] bg-linear-to-b from-white to-[#ebe9ed]">
                            <svg width="30" height="20" viewBox="0 0 30 20" fill="none" stroke="#f00">
                                <path d="M1 10C5-2 10-2 15 10s10 12 14 0" />
                            </svg>
                        </button>
                        <button aria-label="Непрерывно" className="w-[40px] h-[28px] flex items-center justify-center border border-[#ff0000] bg-[#f6f5f7]">
                            <svg width="34" height="20" viewBox="0 0 34 20" fill="none" shapeRendering="crispEdges">
                                <path d="M1 2l2 5h2l2-4h2l1 4h2l2-4h2l1 4h2l2-4h2l1 4h2l2-4" stroke="#f00" />
                                <path d="M1 15h3l2-3 2 4h3l2-4 2 4h3l2-4 2 4h3l2-4 2 3" stroke="#00f" />
                                <path d="M33 2v6l-4-3zM33 12v6l-4-3z" fill="#000080" />
                            </svg>
                        </button>
                    </div>
                    <div className="flex items-center gap-[16px] pl-[3px] mt-[2px]">
                        <button className="w-[83px] h-[28px] flex items-center pl-[9px] gap-[18px] border border-[#003c74] rounded-[2px] bg-linear-to-b from-white to-[#ebe9ed] text-[12px] font-bold">
                            <svg width="11" height="20" viewBox="0 0 11 20">
                                <path d="M1 1v18l9-9z" fill="#00ff00" stroke="#808080" />
                            </svg>
                            Пуск
                        </button>
                        <output className="pt-[12px] text-[12px] leading-[14px] font-bold text-[#008000]">6.94</output>
                    </div>
                </Group>
            </div>
        </div>
    );
}

function StatusBar() {
    const cell = "h-[16px] pl-[3px] border-t border-l border-[#a5a3a8] text-[11px] leading-[15px]";
    return (
        <footer className="flex gap-[4px] pt-[2px] border-t border-t-white border-b border-b-black">
            <p className={`${cell} w-[189px] border-r border-r-white whitespace-nowrap`}>USB Осциллограф не подключен</p>
            <p className={`${cell} flex-1 border-r border-r-white`} />
            <p className={`${cell} w-[48px]`}>1.5</p>
        </footer>
    );
}

export default function App() {
    return (
        <main className="bg-white px-[4px] pt-[4px] font-['Liberation_Sans',sans-serif] text-black">
            <div className="bg-[#ebe9ed]">
                <TitleBar />
                <MenuBar />
                <Tabs />
                <Toolbar />
                <div className="pl-px">
                    <Oscillogram />
                </div>
                <ScrollRow />
                <Panel />
                <StatusBar />
                <div className="h-[4px] bg-[#6c9cc8]" />
            </div>
        </main>
    );
}
